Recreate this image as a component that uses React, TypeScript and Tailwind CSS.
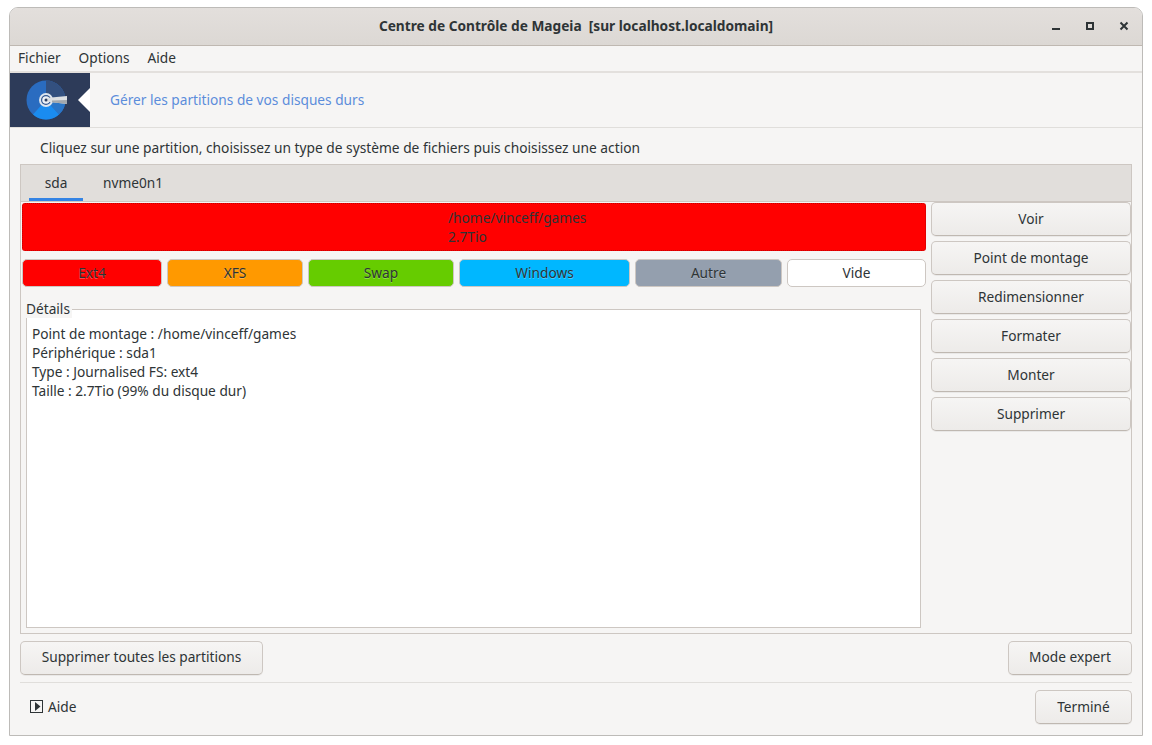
const Btn = ({ label, className = "" }: { label: string; className?: string }) => (
  <button className={"flex items-center justify-center rounded-[5px] border border-[#cdc7c2] border-b-[#bfb8b1] bg-gradient-to-b from-[#f6f5f4] to-[#edebe9] text-[#2e3436] shadow-[0_1px_0_rgba(0,0,0,0.05)] " + className}>
    {label}
  </button>
);

const Swatch = ({ label, className }: { label: string; className: string }) => (
  <div className={"flex h-[28px] items-center justify-center rounded-[5px] border border-[#cdc7c2] text-[#2e3436] [text-shadow:0_1px_0_rgba(255,255,255,0.3)] " + className}>
    {label}
  </div>
);

const DiskIcon = () => (
  <svg width="41" height="40" viewBox="0 0 41 40" className="overflow-visible">
    <circle cx="20" cy="20" r="19.5" fill="#2a6cc0" />
    <path d="M20 20 L20 0.5 A19.5 19.5 0 0 1 39.5 20 Z" fill="#33507f" />
    <path d="M20 20 L7 34.5 A19.5 19.5 0 0 0 33 34.5 Z" fill="#1a8cf0" />
    <path d="M20 20 L39.5 20 A19.5 19.5 0 0 1 33 34.5 Z" fill="#2a76c8" />
    <circle cx="20" cy="20" r="7" fill="#dde5ee" />
    <circle cx="20" cy="20" r="5" fill="#2f5590" />
    <circle cx="20" cy="20" r="3.8" fill="#eef2f6" />
    <path d="M20 18 L41 16 L41 24 L20 21.5 Z" fill="#dcdfe2" />
    <path d="M26 20.5 L41 20 L41 24 L26 22.2 Z" fill="#a3a8ad" />
    <circle cx="20" cy="20" r="1.5" fill="#2b3f63" />
  </svg>
);

export default function App() {
  return (
    <div className="h-[745px] w-[1152px] bg-white pl-[9px] pt-[7px] font-['Noto_Sans',sans-serif] text-[13.7px] text-[#2e3436]">
      <div className="flex h-[729px] w-[1134px] flex-col overflow-hidden rounded-t-[9px] border border-[#bdbbb8] bg-[#f6f5f4]">
        <div className="relative flex h-[38px] shrink-0 items-center justify-center border-b border-[#bfb8b1] bg-gradient-to-b from-[#e3dfdc] to-[#dcd8d4] font-bold">
          <span className="whitespace-pre">Centre de Contrôle de Mageia  [sur localhost.localdomain]</span>
          <div className="absolute right-[8px] top-[12px] flex items-center gap-[18px]">
            <svg width="16" height="16" viewBox="0 0 16 16"><rect x="2" y="8" width="8" height="2" fill="#2e3436" /></svg>
            <svg width="16" height="16" viewBox="0 0 16 16"><rect x="3" y="3" width="6" height="6" fill="none" stroke="#2e3436" strokeWidth="2" /></svg>
            <svg width="16" height="16" viewBox="0 0 16 16"><path d="M2.5 2.5 L9.5 9.5 M9.5 2.5 L2.5 9.5" stroke="#2e3436" strokeWidth="2" fill="none" /></svg>
          </div>
        </div>
        <div className="flex h-[27px] shrink-0 items-center gap-[18px] border-b-2 border-[#e3e0dd] pl-[8px]">
          <span>Fichier</span>
          <span>Options</span>
          <span>Aide</span>
        </div>
        <div className="flex h-[55px] shrink-0 items-center border-b border-[#e0dedb]">
          <div className="relative flex h-[54px] w-[80px] shrink-0 items-center bg-[#2d3b59] pl-[16px]">
            <DiskIcon />
            <div className="absolute right-0 top-[15px] h-0 w-0 border-y-[12px] border-r-[12px] border-y-transparent border-r-white" />
          </div>
          <span className="ml-[20px] text-[#5c8ddb]">Gérer les partitions de vos disques durs</span>
        </div>
        <div className="flex h-[36px] shrink-0 items-center pl-[30px] pt-[4px] text-[13.75px]">Cliquez sur une partition, choisissez un type de système de fichiers puis choisissez une action</div>
        <div className="mx-[10px] flex h-[470px] shrink-0 flex-col border border-[#cdc7c2]">
          <div className="flex h-[37px] shrink-0 border-b border-[#cdc7c2] bg-[#e1dedb] pl-[8px]">
            <div className="flex w-[54px] items-center justify-center border-b-[3px] border-[#3584e4] pt-[4px]">sda</div>
            <div className="ml-[5px] flex w-[89px] items-center justify-center pl-[1px] pt-[1px]">nvme0n1</div>
          </div>
          <div className="flex flex-1 gap-[5px] pl-[1px] pr-[0px] pt-[1px]">
            <div className="flex w-[904px] flex-col">
              <div className="flex h-[48px] flex-col items-start justify-center rounded-[3px] border border-dotted border-[#c40000] bg-[#ff0000] pb-[1px] pl-[425px] leading-[19px]">
                <span>/home/vinceff/games</span>
                <span>2.7Tio</span>
              </div>
              <div className="mt-[8px] flex gap-[5px]">
                <Swatch label="Ext4" className="w-[140px] bg-[#ff0000]" />
                <Swatch label="XFS" className="w-[136px] bg-[#ff9900]" />
                <Swatch label="Swap" className="w-[146px] bg-[#66cc00]" />
                <Swatch label="Windows" className="w-[171px] bg-[#00b7ff]" />
                <Swatch label="Autre" className="w-[147px] bg-[#949fae]" />
                <Swatch label="Vide" className="w-[139px] bg-white" />
              </div>
              <div className="relative ml-[4px] mt-[22px] h-[319px] w-[895px] border border-[#cdc7c2] bg-white px-[5px] pt-[14px] leading-[19px]">
                <span className="absolute -left-[1px] -top-[10px] bg-[#f6f5f4] pr-[2px] leading-[18px]">Détails</span>
                <div>Point de montage : /home/vinceff/games</div>
                <div>Périphérique : sda1</div>
                <div>Type : Journalised FS: ext4</div>
                <div>Taille : 2.7Tio (99% du disque dur)</div>
              </div>
            </div>
            <div className="-mt-[1px] flex w-[200px] flex-col gap-[5px]">
              <Btn label="Voir" className="h-[34px]" />
              <Btn label="Point de montage" className="h-[34px]" />
              <Btn label="Redimensionner" className="h-[34px]" />
              <Btn label="Formater" className="h-[34px]" />
              <Btn label="Monter" className="h-[34px]" />
              <Btn label="Supprimer" className="h-[34px]" />
            </div>
          </div>
        </div>
        <div className="mx-[10px] mt-[7px] flex h-[34px] shrink-0 justify-between">
          <Btn label="Supprimer toutes les partitions" className="w-[243px] pb-[1px]" />
          <Btn label="Mode expert" className="w-[124px] pb-[1px]" />
        </div>
        <div className="mx-[10px] mt-[7px] h-px shrink-0 bg-[#e0dedb]" />
        <div className="mx-[10px] mt-[7px] flex h-[34px] shrink-0 items-center justify-between">
          <div className="flex items-center pl-[10px]">
            <svg width="14" height="14" viewBox="0 0 14 14" className="mr-[4px]">
              <rect x="0.5" y="0.5" width="12" height="12" fill="none" stroke="#2e3436" />
              <path d="M5 2 L10.5 6.5 L5 11 Z" fill="#2e3436" />
            </svg>
            Aide
          </div>
          <Btn label="Terminé" className="h-[34px] w-[97px]" />
        </div>
      </div>
    </div>
  );
}
